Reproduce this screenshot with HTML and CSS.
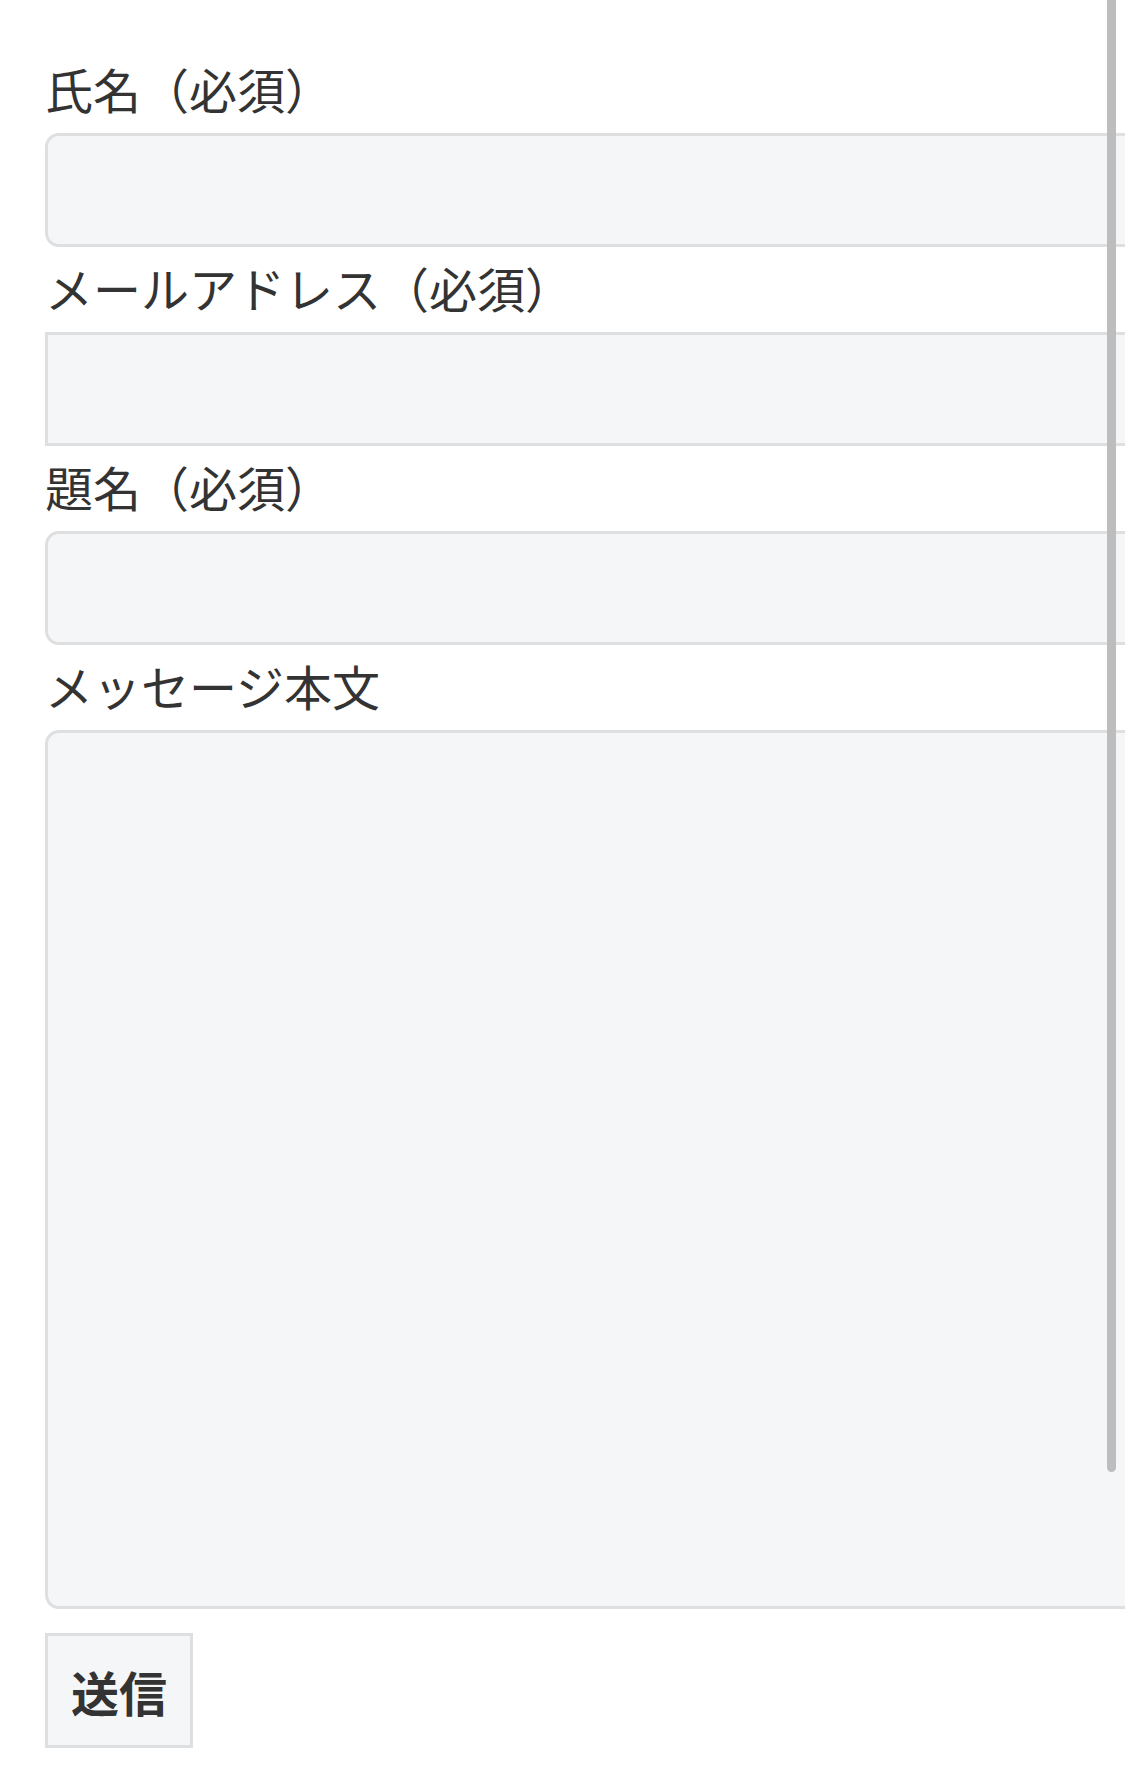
FILE: index.html
```html
<!DOCTYPE html>
<html lang="ja">
<head>
<meta charset="utf-8">
<title>お問い合わせ</title>
<link rel="stylesheet" href="styles.css">
</head>
<body>
<form class="form">
  <label class="label">氏名（必須）</label>
  <div class="field rounded"></div>
  <label class="label">メールアドレス（必須）</label>
  <div class="field"></div>
  <label class="label">題名（必須）</label>
  <div class="field rounded"></div>
  <label class="label">メッセージ本文</label>
  <div class="field area rounded"></div>
  <div class="actions"><button type="button" class="submit">送信</button></div>
</form>
<div class="scrollbar"></div>
</body>
</html>
```
FILE: styles.css
```css
html, body {
  margin: 0;
  padding: 0;
  background: #ffffff;
  overflow: hidden;
  width: 1125px;
  height: 1784px;
}
body {
  font-family: "Noto Sans CJK JP", "Noto Sans", sans-serif;
  color: #333333;
}
.form {
  display: flex;
  flex-direction: column;
  align-items: flex-start;
  padding: 48px 0 0 45px;
}
.label {
  display: block;
  box-sizing: border-box;
  font-size: 48px;
  line-height: 81px;
  height: 85px;
  padding-bottom: 4px;
  white-space: nowrap;
}
.field {
  box-sizing: border-box;
  width: 1200px;
  height: 114px;
  border: 3px solid #dedfe1;
  background: #f5f6f8;
}
.rounded {
  border-radius: 14px;
}
.area {
  height: 879px;
}
.actions {
  margin-top: 24px;
}
.submit {
  box-sizing: border-box;
  width: 148px;
  height: 115px;
  border: 3px solid #dedfe1;
  background: #f5f6f8;
  border-radius: 0;
  font-family: "Noto Sans CJK JP", "Noto Sans", sans-serif;
  font-size: 48px;
  font-weight: 700;
  color: #333333;
  padding: 0;
}
.scrollbar {
  position: fixed;
  top: 0;
  right: 9px;
  width: 9px;
  height: 1472px;
  background: #bdbdbe;
  border-radius: 0 0 5px 5px;
}
```
